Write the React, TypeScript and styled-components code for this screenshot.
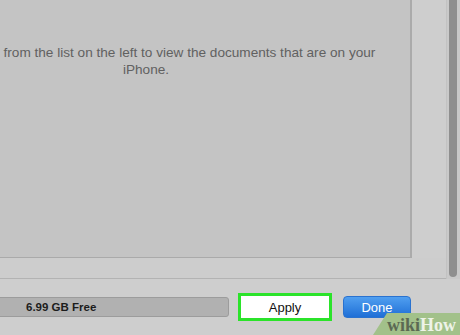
import styled, { createGlobalStyle } from 'styled-components';

const GlobalStyle = createGlobalStyle`
  html, body {
    margin: 0;
    padding: 0;
    background: #cecece;
    overflow: hidden;
  }
`;

const Screen = styled.div`
  position: relative;
  width: 460px;
  height: 335px;
  overflow: hidden;
  display: flex;
  flex-direction: column;
  background: #cecece;
  font-family: "Liberation Sans", Arial, sans-serif;
`;

const Upper = styled.div`
  display: flex;
  height: 279px;
  flex: none;
`;

const ContentColumn = styled.div`
  flex: 1;
  display: flex;
  flex-direction: column;
  border-bottom: 1px solid #b3b3b3;
`;

// the panel runs past the left edge of the window, so its text is clipped there
const FilesPanel = styled.div`
  flex: none;
  width: 530px;
  height: 258px;
  margin-left: -118px;
  box-sizing: border-box;
  background: #c4c4c4;
  border-right: 2px solid #ababab;
  border-bottom: 1px solid #aaaaaa;
  padding-top: 44px;
`;

const EmptyText = styled.p`
  margin: 0;
  text-align: center;
  font-size: 13.6px;
  line-height: 17px;
  color: #616161;
`;

const Band = styled.div`
  flex: 1;
  background: #cdcdcd;
`;

const ScrollTrack = styled.div`
  width: 14px;
  flex: none;
  display: flex;
  box-sizing: border-box;
  border-left: 1px solid #c2c2c2;
  background: #c9c9c9;
  padding: 0 3px 2px 2px;
`;

const ScrollThumb = styled.div`
  flex: 1;
  background: #8f8f8f;
  border-radius: 0 0 4px 4px;
`;

const Footer = styled.div`
  flex: 1;
  display: flex;
  align-items: center;
`;

const CapacityBar = styled.div`
  width: 239px;
  height: 20px;
  margin-left: -10px;
  box-sizing: border-box;
  background: #b1b1b1;
  border: 1px solid #9c9c9c;
  border-radius: 3px;
  display: flex;
  align-items: center;
  padding-left: 35px;
  font-size: 11.5px;
  font-weight: bold;
  color: #1c1c1c;
`;

const ApplyButton = styled.button`
  margin-left: 9px;
  width: 94px;
  height: 28px;
  box-sizing: border-box;
  border: 3px solid #2be32a;
  background: #ffffff;
  font-family: inherit;
  font-size: 13px;
  color: #111;
  padding: 0;
`;

const DoneButton = styled.button`
  margin-left: 11px;
  width: 68px;
  height: 22px;
  box-sizing: border-box;
  border: 1px solid #2a72cf;
  border-radius: 4px;
  background: linear-gradient(#509ff0, #1f6fd6);
  font-family: inherit;
  font-size: 13px;
  color: #ffffff;
  padding: 0;
`;

const Watermark = styled.div`
  position: absolute;
  right: 0;
  bottom: 0;
  width: 87px;
  height: 22px;
  background: #a2c18a;
  clip-path: polygon(14px 0, 100% 0, 100% 100%, 0 100%);
  display: flex;
  align-items: flex-end;
  padding-left: 14px;
  box-sizing: border-box;
  font-family: "Liberation Serif", "DejaVu Serif", serif;
  font-weight: bold;
  font-size: 18px;
  line-height: 20px;
`;

const Wiki = styled.span<{ $light?: boolean }>`
  color: ${(p) => (p.$light ? '#eef3e8' : '#5b6953')};
`;

export default function App() {
  return (
    <Screen>
      <GlobalStyle />
      <Upper>
        <ContentColumn>
          <FilesPanel>
            <EmptyText>
              Select an app from the list on the left to view the documents that are on your
              <br />
              iPhone.
            </EmptyText>
          </FilesPanel>
          <Band />
        </ContentColumn>
        <ScrollTrack>
          <ScrollThumb />
        </ScrollTrack>
      </Upper>
      <Footer>
        <CapacityBar>6.99 GB Free</CapacityBar>
        <ApplyButton>Apply</ApplyButton>
        <DoneButton>Done</DoneButton>
      </Footer>
      <Watermark>
        <Wiki>wiki</Wiki>
        <Wiki $light>How</Wiki>
      </Watermark>
    </Screen>
  );
}
